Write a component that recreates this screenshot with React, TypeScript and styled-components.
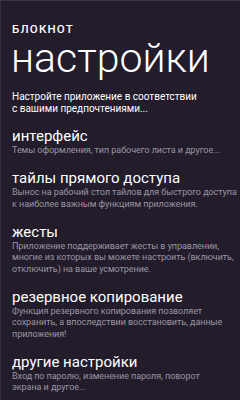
import React from "react";
import styled, { createGlobalStyle } from "styled-components";

const GlobalStyle = createGlobalStyle`
  html, body {
    margin: 0;
    padding: 0;
    background-color: #221c2b;
  }
  body {
    font-family: Roboto, "Open Sans", sans-serif;
    color: #ffffff;
  }
`;

const Screen = styled.div`
  width: 240px;
  height: 400px;
  box-sizing: border-box;
  background-color: #221c2b;
  border-top: 1px solid #3a3443;
  border-left: 1px solid #35303d;
  padding: 22px 0 0 11px;
  overflow: hidden;
`;

const AppTitle = styled.div`
  font-size: 11.5px;
  font-weight: 500;
  line-height: 12px;
  letter-spacing: 1.2px;
`;

const PageTitle = styled.h1`
  margin: 0;
  font-size: 41px;
  font-weight: 300;
  line-height: 46px;
  margin-left: -1px;
`;

const Intro = styled.p`
  margin: 10px 0 0 0;
  font-size: 10px;
  line-height: 11.5px;
`;

const List = styled.div`
  display: flex;
  flex-direction: column;
  gap: 12.5px;
  margin-top: 13px;
`;

const Item = styled.div`
  display: flex;
  flex-direction: column;
`;

const ItemTitle = styled.div`
  font-size: 15px;
  font-weight: 400;
  line-height: 18px;
`;

const ItemLine = styled.div`
  font-size: 9px;
  line-height: 11.5px;
  letter-spacing: -0.05px;
  color: #9a96a2;
  white-space: nowrap;
`;

const items = [
  {
    title: "интерфейс",
    lines: ["Темы оформления, тип рабочего листа и другое..."],
  },
  {
    title: "тайлы прямого доступа",
    lines: [
      "Вынос на рабочий стол тайлов для быстрого доступа",
      "к наиболее важным функциям приложения.",
    ],
  },
  {
    title: "жесты",
    lines: [
      "Приложение поддерживает жесты в управлении,",
      "многие из которых вы можете настроить (включить,",
      "отключить) на ваше усмотрение.",
    ],
  },
  {
    title: "резервное копирование",
    lines: [
      "Функция резервного копирования позволяет",
      "сохранить, а впоследствии восстановить, данные",
      "приложения!",
    ],
  },
  {
    title: "другие настройки",
    lines: ["Вход по паролю, изменение пароля, поворот", "экрана и другое..."],
  },
];

const App = () => {
  return (
    <>
      <GlobalStyle />
      <Screen>
        <AppTitle>БЛОКНОТ</AppTitle>
        <PageTitle>настройки</PageTitle>
        <Intro>
          Настройте приложение в соответствии
          <br />с вашими предпочтениями...
        </Intro>
        <List>
          {items.map((item) => (
            <Item key={item.title}>
              <ItemTitle>{item.title}</ItemTitle>
              {item.lines.map((line) => (
                <ItemLine key={line}>{line}</ItemLine>
              ))}
            </Item>
          ))}
        </List>
      </Screen>
    </>
  );
};

export default App;
